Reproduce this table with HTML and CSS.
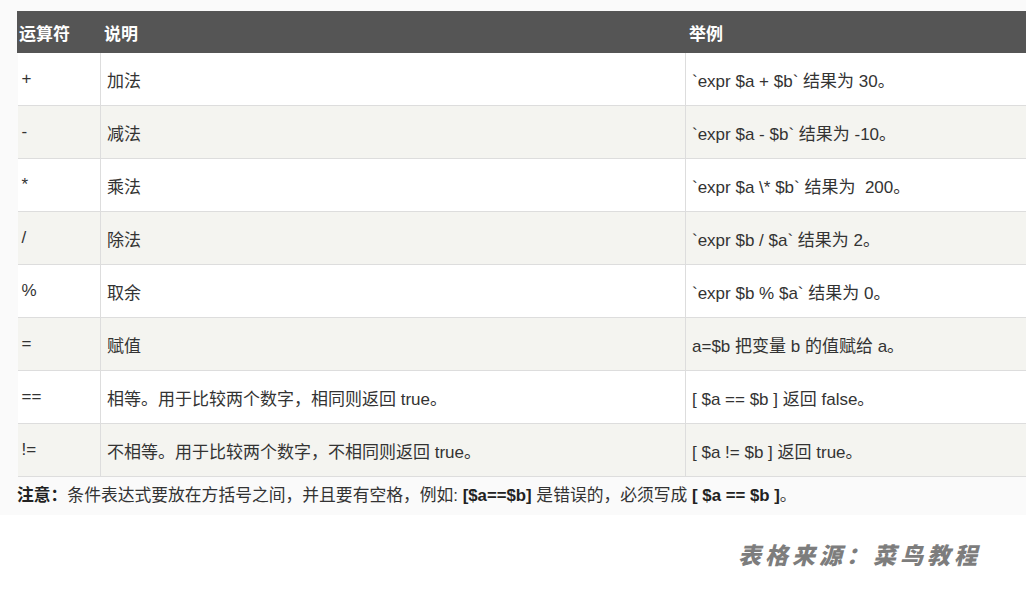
FILE: index.html
```html
<!DOCTYPE html>
<html lang="zh-CN">
<head>
<meta charset="utf-8">
<link rel="stylesheet" href="styles.css">
</head>
<body>
<div class="sheet">
  <table class="ops">
    <colgroup>
      <col class="c1"><col class="c2"><col class="c3">
    </colgroup>
    <thead>
      <tr><th>运算符</th><th>说明</th><th>举例</th></tr>
    </thead>
    <tbody>
      <tr><td>+</td><td>加法</td><td>`expr $a + $b` 结果为 30。</td></tr>
      <tr><td>-</td><td>减法</td><td>`expr $a - $b` 结果为 -10。</td></tr>
      <tr><td>*</td><td>乘法</td><td>`expr $a \* $b` 结果为&nbsp; 200。</td></tr>
      <tr><td>/</td><td>除法</td><td>`expr $b / $a` 结果为 2。</td></tr>
      <tr><td>%</td><td>取余</td><td>`expr $b % $a` 结果为 0。</td></tr>
      <tr><td>=</td><td>赋值</td><td>a=$b 把变量 b 的值赋给 a。</td></tr>
      <tr><td>==</td><td>相等。用于比较两个数字，相同则返回 true。</td><td>[ $a == $b ] 返回 false。</td></tr>
      <tr><td>!=</td><td>不相等。用于比较两个数字，不相同则返回 true。</td><td>[ $a != $b ] 返回 true。</td></tr>
    </tbody>
  </table>
  <p class="note"><b>注意：</b>条件表达式要放在方括号之间，并且要有空格，例如: <b>[$a==$b]</b> 是错误的，必须写成 <b>[ $a == $b ]</b>。</p>
</div>
<div class="source">表格来源：菜鸟教程</div>
</body>
</html>
```
FILE: styles.css
```css
html, body {
  margin: 0;
  padding: 0;
  background: #ffffff;
  overflow: hidden;
  width: 1026px;
  height: 611px;
}
body {
  font-family: "Liberation Sans", Arial, "Noto Sans CJK SC", sans-serif;
  color: #333333;
  font-size: 17px;
}
.sheet {
  background: #fafafa;
  padding: 11px 0 0 17px;
  width: 1100px;
}
.ops {
  border-collapse: collapse;
  table-layout: fixed;
  width: 1060px;
}
.c1 { width: 83px; }
.c2 { width: 585px; }
.c3 { width: 392px; }
.ops th {
  background: #555555;
  color: #ffffff;
  font-weight: bold;
  text-align: left;
  height: 40px;
  padding: 0 3px 0 1px;
  border: 1px solid #555555;
  border-left-color: #bbbbbb;
  font-size: 17px;
}
.ops th:first-child { border-left-color: #555555; padding-left: 1px; }
.ops th + th { padding-left: 3px; }
.ops td {
  height: 52px;
  padding: 0 6px;
  border: 1px solid #dddddd;
  vertical-align: middle;
  background: #ffffff;
  font-size: 17px;
}
.ops td:first-child { padding-left: 4px; border-left: none; }
.ops tbody tr:nth-child(even) td { background: #f4f4f0; }
.note {
  margin: 0;
  height: 38px;
  line-height: 38px;
  font-size: 16.8px;
  color: #333333;
}
.note b { color: #222222; }
.source {
  margin: 22px 45px 0 0;
  text-align: right;
  font-family: "Noto Sans CJK SC", sans-serif;
  font-size: 23px;
  font-weight: 900;
  font-style: italic;
  letter-spacing: 4px;
  color: #7d7d7d;
}
```
